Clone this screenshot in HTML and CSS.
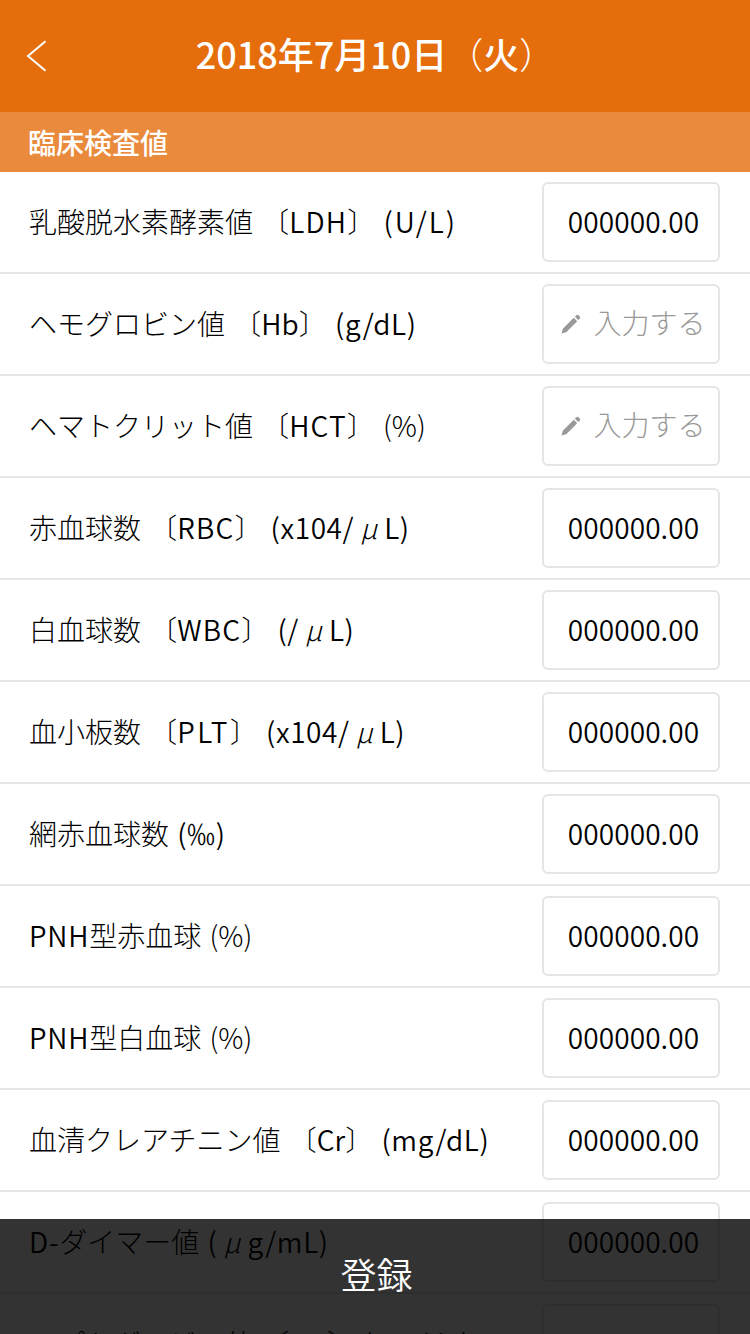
FILE: index.html
```html
<!DOCTYPE html>
<html lang="ja">
<head>
<meta charset="utf-8">
<title>臨床検査値</title>
<link rel="stylesheet" href="styles.css">
</head>
<body>
<div class="screen">
  <header class="header">
    <svg class="back" width="22" height="32" viewBox="0 0 22 32"><path d="M19.500 1.200 2 16 19.500 30.800" fill="none" stroke="#fff" stroke-width="2"/></svg>
    <h1 class="title">2018年7月10日<span class="thin">（</span>火<span class="thin">）</span></h1>
  </header>
  <h2 class="section">臨床検査値</h2>
  <ul class="list">
    <li class="row"><span class="label">乳酸脱水素酵素値 〔<span class="latin">LDH</span>〕 <span class="unit loose">(U/L)</span></span><span class="field"><span class="value">000000.00</span></span></li>
    <li class="row"><span class="label">ヘモグロビン値 〔<span class="latin pair">Hb</span>〕 <span class="unit">(g/dL)</span></span><span class="field empty"><svg class="pen" width="20" height="20" viewBox="0 0 20 20"><path d="M.5 19.500 1.800 14.800 12.800 3.800 16.200 7.200 5.200 18.200ZM13.900 2.700 15.300 1.300Q16.400.3 17.500 1.200L18.800 2.500Q19.700 3.600 18.700 4.700L17.300 6.100Z" fill="#999"/></svg><span class="hint">入力する</span></span></li>
    <li class="row"><span class="label">ヘマトクリット値 〔<span class="latin">HCT</span>〕 <span class="unit tight">(%)</span></span><span class="field empty"><svg class="pen" width="20" height="20" viewBox="0 0 20 20"><path d="M.5 19.500 1.800 14.800 12.800 3.800 16.200 7.200 5.200 18.200ZM13.900 2.700 15.300 1.300Q16.400.3 17.500 1.200L18.800 2.500Q19.700 3.600 18.700 4.700L17.300 6.100Z" fill="#999"/></svg><span class="hint">入力する</span></span></li>
    <li class="row"><span class="label">赤血球数 〔<span class="latin">RBC</span>〕 <span class="unit">(x104/<span class="mu">μ</span>L)</span></span><span class="field"><span class="value">000000.00</span></span></li>
    <li class="row"><span class="label">白血球数 〔<span class="latin">WBC</span>〕 <span class="unit">(/<span class="mu">μ</span>L)</span></span><span class="field"><span class="value">000000.00</span></span></li>
    <li class="row"><span class="label">血小板数 〔<span class="latin wide">PLT</span>〕 <span class="unit">(x104/<span class="mu">μ</span>L)</span></span><span class="field"><span class="value">000000.00</span></span></li>
    <li class="row"><span class="label">網赤血球数 <span class="unit">(‰)</span></span><span class="field"><span class="value">000000.00</span></span></li>
    <li class="row"><span class="label"><span class="latin lead">PNH</span>型赤血球 <span class="unit tight">(%)</span></span><span class="field"><span class="value">000000.00</span></span></li>
    <li class="row"><span class="label"><span class="latin lead">PNH</span>型白血球 <span class="unit tight">(%)</span></span><span class="field"><span class="value">000000.00</span></span></li>
    <li class="row"><span class="label">血清クレアチニン値 〔<span class="latin pair">Cr</span>〕 <span class="unit">(mg/dL)</span></span><span class="field"><span class="value">000000.00</span></span></li>
    <li class="row"><span class="label"><span class="latin lead">D-</span>ダイマー値 <span class="unit">(<span class="mu">μ</span>g/mL)</span></span><span class="field"><span class="value">000000.00</span></span></li>
    <li class="row"><span class="label">ハプトグロビン値 〔<span class="latin pair">Hp</span>〕 <span class="unit">(mg/dL)</span></span><span class="field"><span class="value">000000.00</span></span></li>
  </ul>
  <button class="submit">登録</button>
</div>
</body>
</html>
```
FILE: styles.css
```css
* { box-sizing: border-box; }
body { margin: 0; background: #fff; color: #000; font-family: "Noto Sans CJK JP", sans-serif; }
.screen { position: relative; width: 750px; height: 1334px; overflow: hidden; }
.header { display: grid; grid-template-columns: 48px 1fr 74px; align-items: center; height: 112px; padding-left: 26px; background: #e56d0b; }
.back { display: block; }
.title { margin: 0; padding: 0 0 6px 1px; color: #fff; font-size: 36px; font-weight: 500; line-height: 50px; text-align: center; white-space: nowrap; }
.thin { font-weight: 300; }
.section { height: 60px; margin: 0; padding-left: 28px; background: #e98a3c; color: #fff; font-size: 28px; font-weight: 500; line-height: 60px; }
.list { margin: 0; padding: 0; list-style: none; }
.row { display: flex; align-items: center; justify-content: space-between; height: 102px; padding: 0 30px 0 29px; border-bottom: 2px solid #e5e5e5; }
.label { padding-bottom: 2px; font-size: 28px; font-weight: 300; line-height: 40px; white-space: nowrap; word-spacing: 2px; }
.latin { font-weight: 350; letter-spacing: 1.2px; }
.pair { letter-spacing: .1px; }
.wide { letter-spacing: 2.4px; }
.lead { letter-spacing: .8px; }
.unit { font-weight: 350; letter-spacing: .6px; }
.loose { letter-spacing: 2px; }
.tight { font-weight: 300; letter-spacing: 0; }
.mu { display: inline-block; width: 30px; font-style: italic; font-weight: 300; text-align: center; }
.field { display: flex; align-items: center; justify-content: center; width: 178px; height: 80px; border: 2px solid #e5e5e5; border-radius: 6px; font-size: 28px; font-weight: 350; }
.value { padding: 0 0 3px 5px; letter-spacing: .1px; }
.empty { gap: 12px; padding-left: 5px; color: #999; font-weight: 300; }
.hint { padding-bottom: 5px; }
.submit { position: absolute; left: 0; bottom: 0; width: 750px; height: 115px; border: 0; padding: 0 0 6px 3px; background: rgba(0, 0, 0, .8); color: #fff; font: 350 36px/109px "Noto Sans CJK JP", sans-serif; }
```
